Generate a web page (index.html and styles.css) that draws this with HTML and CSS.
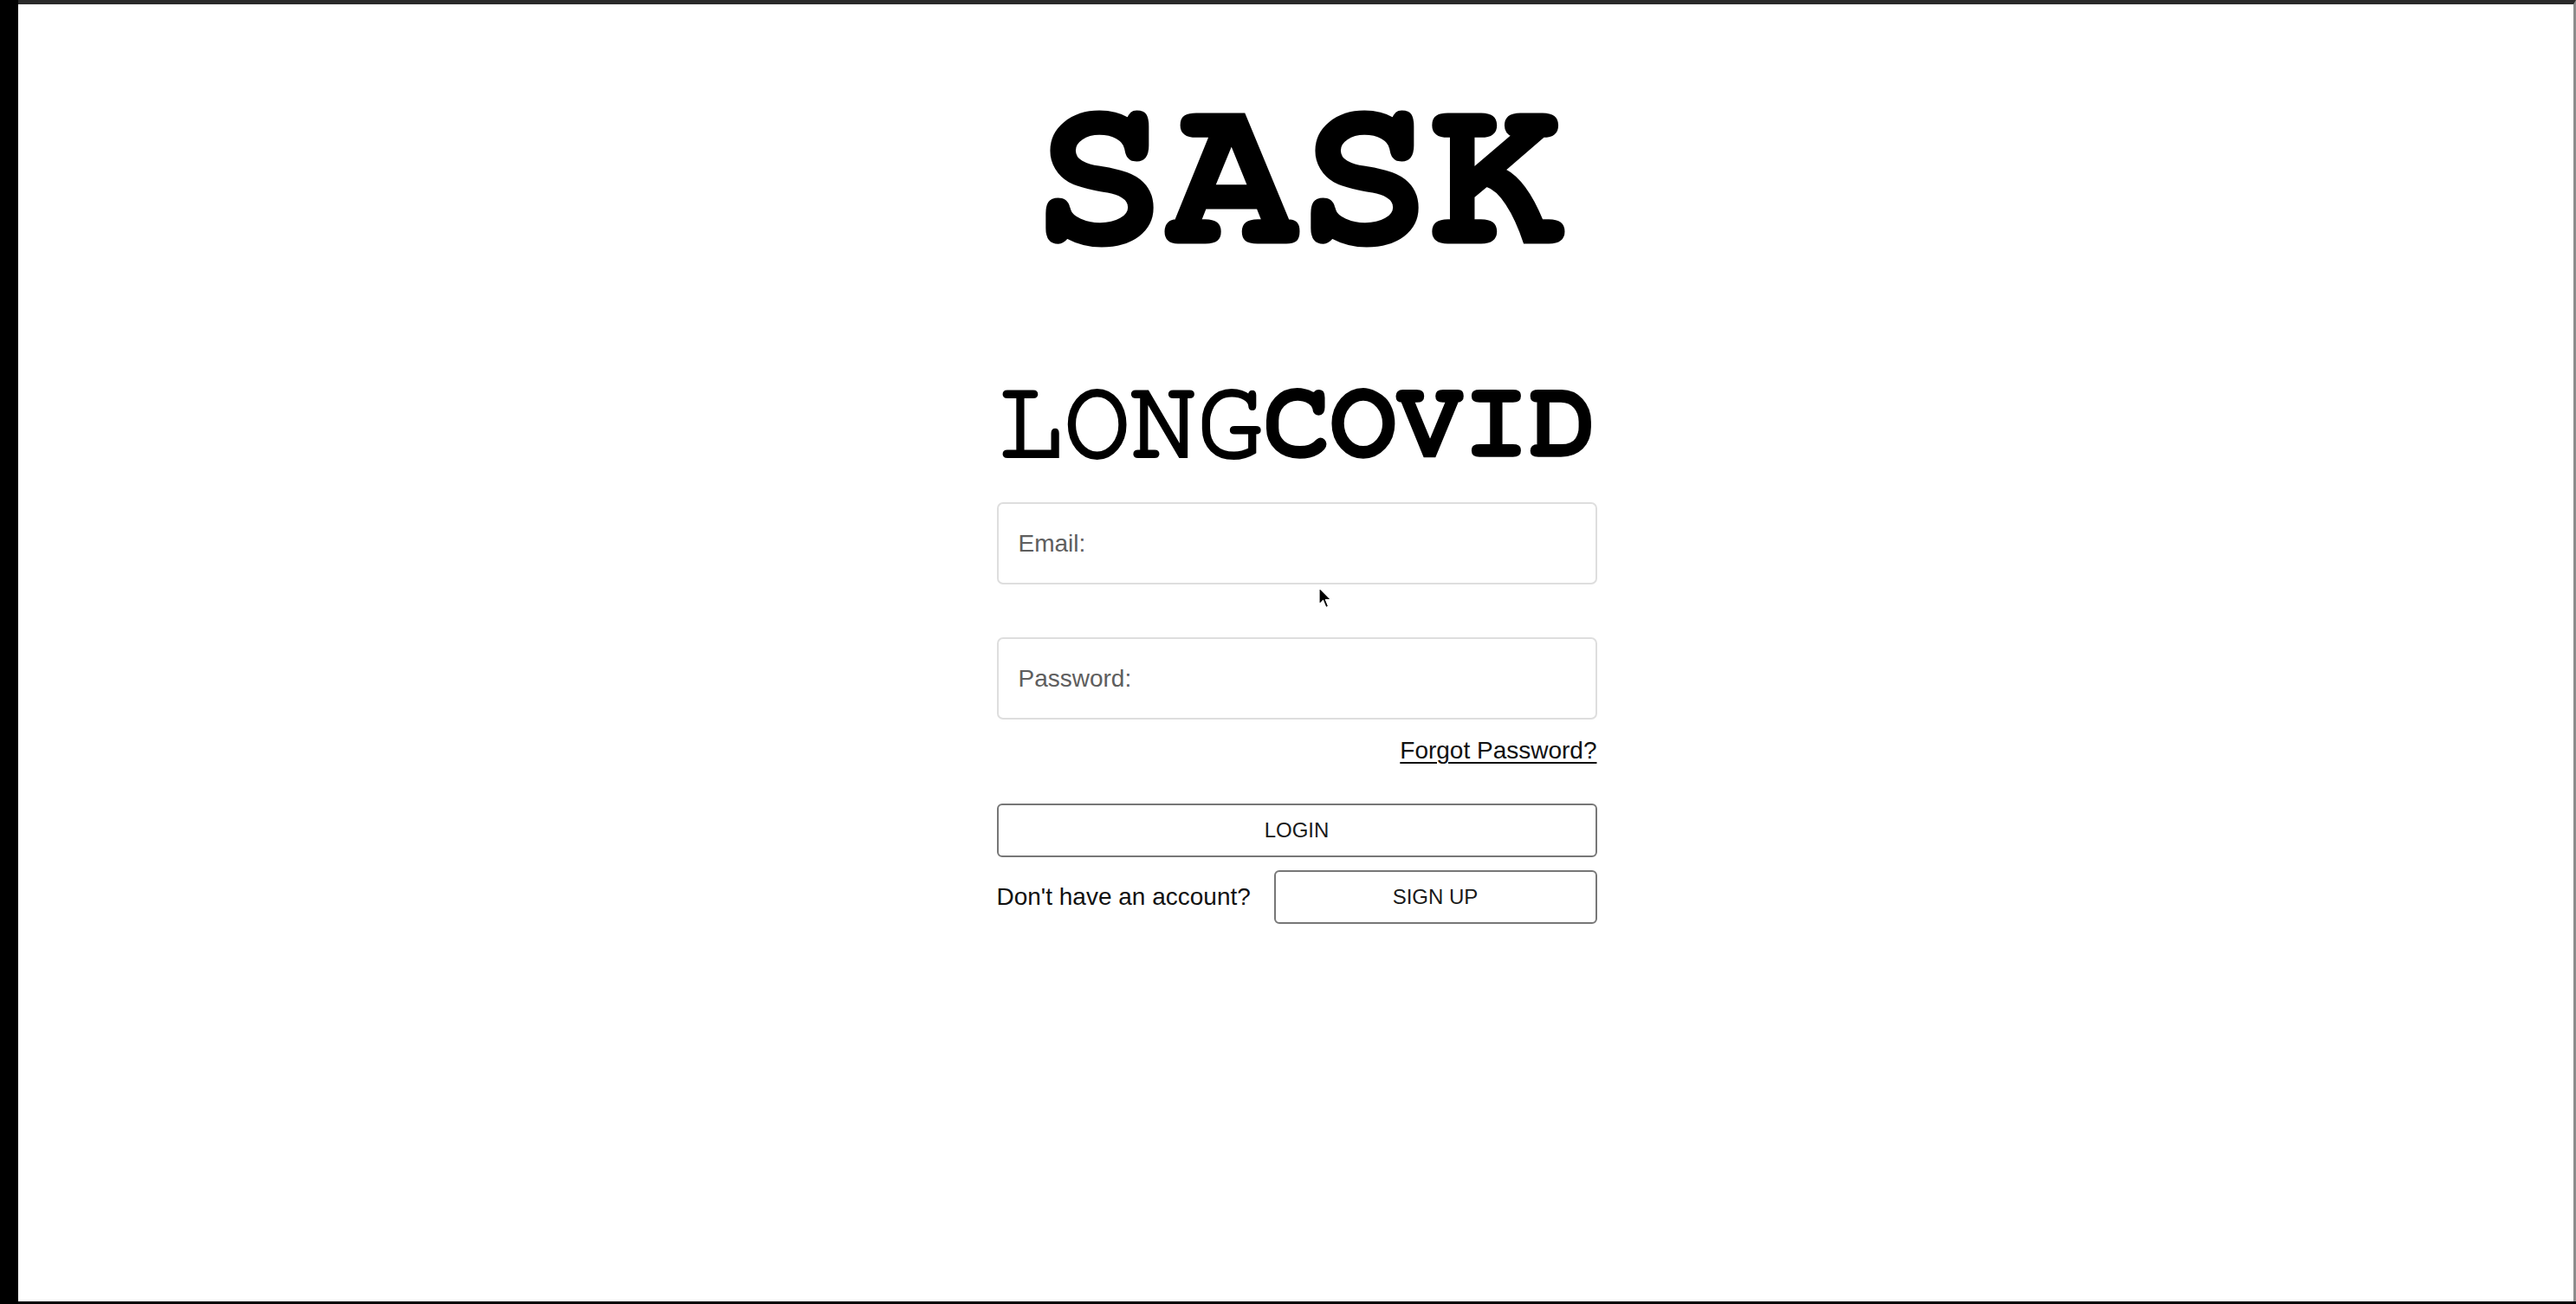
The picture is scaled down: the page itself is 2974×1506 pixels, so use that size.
FILE: index.html
```html
<!DOCTYPE html>
<html lang="en">
<head>
<meta charset="utf-8">
<title>SASK LongCOVID</title>
<link rel="stylesheet" href="styles.css">
</head>
<body>
<div class="frame">
  <main class="screen">
    <div class="column">
      <h1 class="brand">SASK</h1>
      <h2 class="title"><span class="title-light">LONG</span><span class="title-bold">COVID</span></h2>
      <form class="form">
        <input class="field" type="email" placeholder="Email:">
        <input class="field" type="password" placeholder="Password:">
        <div class="forgot-row"><a class="forgot" href="#">Forgot Password?</a></div>
        <button class="btn btn-login" type="button">LOGIN</button>
        <div class="signup-row">
          <span class="signup-text">Don't have an account?</span>
          <button class="btn btn-signup" type="button">SIGN UP</button>
        </div>
      </form>
    </div>
    <svg class="cursor" width="16" height="26" viewBox="0 0 16 26"><path d="M1 1 L1 20 L5.5 15.5 L8.8 23.5 L11.6 22.3 L8.4 14.6 L14.5 14.6 Z" fill="#000" stroke="#fff" stroke-width="1.2" stroke-linejoin="round"/></svg>
  </main>
</div>
</body>
</html>
```
FILE: styles.css
```css
* { box-sizing: border-box; }
html, body { margin: 0; padding: 0; height: 100%; }
body { background: #000; font-family: "Liberation Sans", Arial, sans-serif; }
.frame {
  height: 100vh;
  display: flex;
  padding: 0 0 3px 21px;
  background: #000;
}
.screen {
  position: relative;
  flex: 1;
  background: #fff;
  border-top: 5px solid #2a2a2a;
  border-right: 3px solid #8c8c8c;
  display: flex;
  justify-content: center;
}
.column {
  width: 693px;
  margin-left: 2px;
  padding-top: 72px;
  display: flex;
  flex-direction: column;
  align-items: center;
}
.brand {
  margin: 0 0 0 4px;
  font-family: FreeMono, "Liberation Mono", monospace;
  font-weight: bold;
  font-size: 255px;
  line-height: 1;
  color: #000;
  -webkit-text-stroke: 3px #000;
  transform: scaleY(0.99);
}
.title {
  margin: 92px 0 28px;
  font-family: FreeMono, "Liberation Mono", monospace;
  font-size: 128px;
  line-height: 1;
  color: #000;
  transform: scaleY(1.03);
  white-space: nowrap;
}
.title-light { font-weight: normal; -webkit-text-stroke: 4px #000; }
.title-bold { font-weight: bold; -webkit-text-stroke: 1.5px #000; }
.form {
  width: 100%;
  display: flex;
  flex-direction: column;
}
.field {
  width: 100%;
  height: 95px;
  border: 2px solid #dedede;
  border-radius: 7px;
  padding: 0 0 0 23px;
  font-family: "Liberation Sans", Arial, sans-serif;
  font-size: 28px;
  color: #333;
  background: #fff;
  outline: none;
}
.field::placeholder { color: #5e5e5e; }
.field + .field { margin-top: 61px; }
.forgot-row { display: flex; justify-content: flex-end; margin-top: 20px; }
.forgot {
  font-size: 28px;
  line-height: 32px;
  color: #111;
  text-decoration: underline;
  text-decoration-thickness: 2px;
  text-underline-offset: 4px;
}
.btn {
  background: #fff;
  border: 2px solid #777;
  border-radius: 6px;
  font-family: "Liberation Sans", Arial, sans-serif;
  font-size: 24px;
  color: #1a1a1a;
  padding: 0;
}
.btn-login { width: 100%; height: 62px; margin-top: 45px; }
.signup-row {
  display: flex;
  align-items: center;
  justify-content: space-between;
  margin-top: 15px;
}
.signup-text { font-size: 28px; color: #111; }
.btn-signup { width: 373px; height: 62px; }
.cursor { position: absolute; left: 1501px; top: 673px; }
```
